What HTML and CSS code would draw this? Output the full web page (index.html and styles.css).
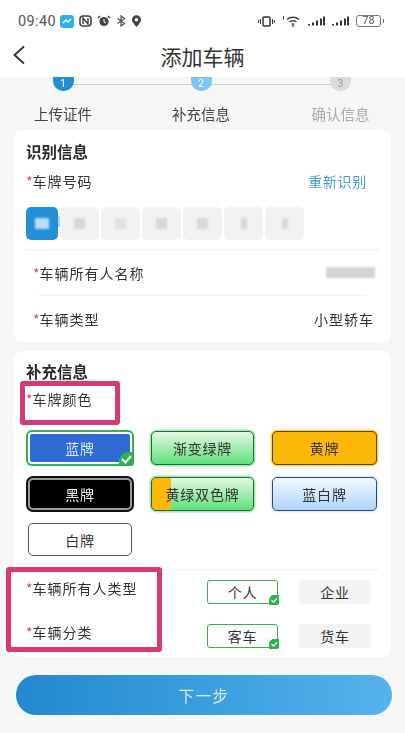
FILE: index.html
```html
<!DOCTYPE html>
<html lang="zh">
<head>
<meta charset="utf-8">
<title>添加车辆</title>
<link rel="stylesheet" href="styles.css">
</head>
<body>
<div class="app">
  <div class="status">
    <div class="status-left">
      <span class="time">09:40</span>
      <svg class="ic" width="14" height="13" viewBox="0 0 14 13"><rect width="14" height="13" rx="3" fill="#2fb4e0"/><path d="M3 8l3-3 2 2 3-3" stroke="#fff" stroke-width="1.3" fill="none"/></svg>
      <svg class="ic" width="13" height="12" viewBox="0 0 13 12"><rect x="1" y="1" width="11" height="10" rx="3" fill="none" stroke="#444" stroke-width="1.6"/><path d="M4 9V3l5 6V3" stroke="#444" stroke-width="1.4" fill="none"/></svg>
      <svg class="ic" width="14" height="12" viewBox="0 0 14 12"><circle cx="7" cy="6.5" r="4.6" fill="#444"/><path d="M1 3l2-2M13 3l-2-2" stroke="#444" stroke-width="1.5"/><path d="M7 4v3l2 1" stroke="#fff" stroke-width="1" fill="none"/></svg>
      <svg class="ic" width="10" height="12" viewBox="0 0 10 12"><path d="M1.5 3.5l7 5L5 11V1l3.5 2.500-7 5" stroke="#555" stroke-width="1.3" fill="none"/></svg>
      <svg class="ic" width="11" height="12" viewBox="0 0 11 12"><path d="M5.500 12C2.500 8.500 1 6.800 1 4.800a4.500 4.500 0 0 1 9 0C10 6.800 8.500 8.500 5.500 12z" fill="#444"/><circle cx="5.500" cy="4.800" r="1.700" fill="#fff"/></svg>
    </div>
    <div class="status-right">
      <svg class="ic" width="17" height="11" viewBox="0 0 17 11"><rect x="5" y="1" width="7" height="9" rx="1" fill="none" stroke="#333" stroke-width="1.5"/><path d="M2.500 3v5M.7 4v3M14.500 3v5M16.300 4v3" stroke="#333"/></svg>
      <svg class="ic wifi" width="19" height="12" viewBox="0 0 19 12"><path d="M5 4.500a9 9 0 0 1 12 0M7.500 7a6 6 0 0 1 7 0M9.500 9.300a3 3 0 0 1 3 0" stroke="#444" stroke-width="1.400" fill="none"/><circle cx="11" cy="11" r="1" fill="#444"/><path d="M1.500 1v3.500" stroke="#444"/></svg>
      <svg class="ic" width="17" height="10" viewBox="0 0 17 10"><path d="M1 8v1.500M5 6.500v3M9 4.500v5M13 2.500v7M16 .5v9" stroke="#333" stroke-width="2"/></svg>
      <svg class="ic" width="17" height="10" viewBox="0 0 17 10"><path d="M1 8v1.500M5 6.500v3M9 4.500v5M13 2.500v7M16 .5v9" stroke="#333" stroke-width="2"/></svg>
      <span class="battery">78</span>
    </div>
  </div>

  <header class="nav">
    <svg class="back" width="14" height="20" viewBox="0 0 14 20"><path d="M12 1.500L2.500 10l9.500 8.500" stroke="#333" stroke-width="1.900" fill="none"/></svg>
    <h1 class="nav-title">添加车辆</h1>
  </header>

  <main class="page">
    <div class="stepper">
      <div class="step">
        <span class="dot dot-done">1</span>
        <span class="step-label">上传证件</span>
      </div>
      <div class="step">
        <span class="dot dot-now">2</span>
        <span class="step-label">补充信息</span>
      </div>
      <div class="step">
        <span class="dot dot-todo">3</span>
        <span class="step-label step-label-todo">确认信息</span>
      </div>
    </div>

    <section class="card card-id">
      <h2 class="card-title">识别信息</h2>
      <div class="row-between plate-head">
        <span class="label"><i class="req">*</i>车牌号码</span>
        <span class="link">重新识别</span>
      </div>
      <div class="plate">
        <span class="cell cell-active"><b class="smudge smudge-light"></b></span>
        <span class="cell"><b class="smudge"></b></span>
        <span class="cell"><b class="smudge smudge-faint"></b></span>
        <span class="cell"><b class="smudge"></b></span>
        <span class="cell"><b class="smudge"></b></span>
        <span class="cell"><b class="smudge smudge-thin"></b></span>
        <span class="cell"><b class="smudge smudge-thin"></b></span>
      </div>
      <div class="info info-first">
        <span class="label"><i class="req">*</i>车辆所有人名称</span>
        <span class="masked"></span>
      </div>
      <div class="info">
        <span class="label label-out"><i class="req">*</i>车辆类型</span>
        <span class="value">小型轿车</span>
      </div>
    </section>

    <section class="card card-extra">
      <h2 class="card-title">补充信息</h2>
      <div class="label color-label"><i class="req">*</i>车牌颜色</div>
      <div class="colors">
        <span class="pl pl-blue">蓝牌<svg class="corner" width="15" height="14" viewBox="0 0 15 14"><path d="M15 0v11a3 3 0 0 1-3 3H0V9a9 9 0 0 1 9-9z" fill="#2fb152"/><path d="M3 7l3.500 3.500L12 4" stroke="#fff" stroke-width="2" fill="none"/></svg></span>
        <span class="pl pl-green">渐变绿牌</span>
        <span class="pl pl-yellow">黄牌</span>
        <span class="pl pl-black">黑牌</span>
        <span class="pl pl-dual">黄绿双色牌</span>
        <span class="pl pl-bluewhite">蓝白牌</span>
        <span class="pl pl-white">白牌</span>
      </div>
      <div class="choices">
        <div class="choice-row">
          <span class="label"><i class="req">*</i>车辆所有人类型</span>
          <div class="opts">
            <span class="opt opt-on">个人<svg class="corner-sm" width="10" height="10" viewBox="0 0 10 10"><path d="M10 0v8a2 2 0 0 1-2 2H0V5a5 5 0 0 1 5-5z" fill="#2fb152"/><path d="M2.500 5l2 2L8 3.500" stroke="#fff" stroke-width="1.300" fill="none"/></svg></span>
            <span class="opt">企业</span>
          </div>
        </div>
        <div class="choice-row">
          <span class="label"><i class="req">*</i>车辆分类</span>
          <div class="opts">
            <span class="opt opt-on">客车<svg class="corner-sm" width="10" height="10" viewBox="0 0 10 10"><path d="M10 0v8a2 2 0 0 1-2 2H0V5a5 5 0 0 1 5-5z" fill="#2fb152"/><path d="M2.500 5l2 2L8 3.500" stroke="#fff" stroke-width="1.300" fill="none"/></svg></span>
            <span class="opt">货车</span>
          </div>
        </div>
      </div>
    </section>

    <button class="next" type="button">下一步</button>
  </main>

  <div class="mark mark-color"></div>
  <div class="mark mark-owner"></div>
</div>
</body>
</html>
```
FILE: styles.css
```css
* { box-sizing: border-box; }
html, body { margin: 0; padding: 0; }
body { font-family: "Noto Sans CJK SC", "Noto Sans", sans-serif; color: #333; background: #f6f6f6; }
.app { position: relative; width: 405px; height: 733px; overflow: hidden; display: flex; flex-direction: column; filter: blur(0.35px); }

.status { height: 36px; padding: 6px 21px 0 18px; display: flex; justify-content: space-between; align-items: center; background: #fff; }
.status-left, .status-right { display: flex; align-items: center; gap: 5px; }
.status-right { gap: 7px; }
.time { font: 14.5px "Roboto", sans-serif; color: #555; letter-spacing: .4px; margin-right: -1px; }
.ic { display: block; flex: none; }
.battery { width: 25px; height: 12px; border: 1px solid #777; border-radius: 3px; font: 10.500px/10px "Roboto", sans-serif; color: #555; text-align: center; margin-right: 3px; position: relative; }
.battery::after { content: ""; position: absolute; right: -4px; top: 3px; width: 1.500px; height: 4px; background: #666; }

.nav { height: 41px; position: relative; background: #fff; display: flex; align-items: center; justify-content: center; }
.back { position: absolute; left: 12px; top: 9px; }
.nav-title { margin: -2px 0 0 0; font-size: 21px; font-weight: 400; color: #333; line-height: 40px; }

.page { flex: 1; padding: 0 14px; display: flex; flex-direction: column; }

.stepper { margin: -8px -14px 0; height: 61px; display: grid; grid-template-columns: 126px 150px 129px; position: relative; overflow: hidden; padding-top: 8px; clip-path: inset(8px 0 0 0); }
.stepper::before { content: ""; position: absolute; left: 70px; right: 70px; top: 15px; height: 1px; background: #d2d2d2; }
.step { display: flex; flex-direction: column; align-items: center; position: relative; }
.dot { width: 21px; height: 14px; border-radius: 0 0 10px 10px; font: 10px/13px "Roboto", sans-serif; color: #fff; text-align: center; }
.dot-done { background: #2390d0; }
.dot-now { background: #7cc6f0; }
.dot-todo { background: #dcdcdc; color: #999; }
.step-label { margin-top: 12px; font-size: 14.500px; line-height: 22px; color: #444; }
.step-label-todo { color: #aaa; }

.card { background: #fff; border-radius: 9px; padding: 11px 12px 0; }
.card-title { margin: 0; font-size: 15.500px; font-weight: 700; line-height: 20px; color: #2b2b2b; }
.label { font-size: 14px; line-height: 20px; color: #333; letter-spacing: 1px; }
.req { font-style: normal; color: #d8474c; letter-spacing: 0; }

.card-id { height: 212px; }
.row-between { display: flex; justify-content: space-between; align-items: center; }
.plate-head { margin-top: 10px; padding-right: 12px; }
.link { font-size: 14px; line-height: 20px; color: #4a9fc9; letter-spacing: .7px; }
.plate { margin-top: 16px; display: flex; gap: 2px; height: 33px; }
.cell { width: 39px; border-radius: 5px; background: #f2f2f2; display: flex; align-items: center; justify-content: center; position: relative; }
.cell-active { width: 32px; background: #2390d6; }
.cell-active::after { content: ""; position: absolute; right: -6px; top: 9px; width: 6px; height: 11px; background: #a9d8f6; }
.smudge { width: 11px; height: 11px; background: #d8d8d8; filter: blur(1px); }
.smudge-light { background: #b9def6; width: 14px; }
.smudge-faint { background: #e2e2e2; }
.smudge-thin { width: 6px; }
.info { height: 46px; margin: 0 12px 0 13px; display: flex; align-items: center; justify-content: space-between; border-top: 1px solid #efefef; }
.info-first { margin: 9px -1px 0 1px; padding: 0 5px 0 6px; }
.label-out { margin-left: -6px; }
.value { font-size: 14px; color: #333; letter-spacing: 1px; margin-right: -7px; }
.masked { width: 49px; height: 11px; background: #d4d4d4; filter: blur(.8px); }

.card-extra { height: 306px; margin-top: 9px; padding-top: 10px; }
.color-label { margin-top: 6px; line-height: 24px; }
.colors { margin-top: 19px; display: grid; grid-template-columns: 108px 105px 107px; column-gap: 16px; row-gap: 10px; grid-auto-rows: 36px; font-size: 14px; }
.pl { position: relative; display: flex; align-items: center; justify-content: center; border-radius: 5px; border: 1.500px solid #333; letter-spacing: .8px; }
.pl-blue { background: #3068d4; color: #dfe9ff; border: 2px solid #fff; box-shadow: 0 0 0 2px #32b060; margin: 2px; border-radius: 4px; }
.corner { position: absolute; right: -4px; bottom: -4px; }
.pl-green { background: linear-gradient(#e4f9e4, #5fe07a); border-color: #1f6a38; box-shadow: 0 0 0 1.500px #9eeab0; margin: 1px; }
.pl-yellow { background: #fdb90a; border-color: #5a4308; box-shadow: 0 0 0 1.500px #fdd35a; margin: 1px; }
.pl-black { background: #000; color: #eee; border: 2px solid #999; box-shadow: 0 0 0 2px #111; margin: 2px; }
.pl-dual { background: linear-gradient(90deg, #fdb90a 0 19px, transparent 19px), linear-gradient(#e4f9e4, #5fe07a); border-color: #1f6a38; box-shadow: 0 0 0 1.500px #9eeab0; margin: 1px; }
.pl-bluewhite { background: linear-gradient(#f2f8ff, #aed5fb); border-color: #2f4a70; box-shadow: 0 0 0 1.500px #dcecfb; margin: 1px; }
.pl-white { width: 104px; margin: 1px 2px 0; height: 33px; border-color: #555; background: #fff; }

.choices { margin-top: 11px; border-top: 1px solid #f0f0f0; }
.choice-row { display: flex; justify-content: space-between; align-items: flex-start; height: 44px; padding: 0 8px 0 0; }
.choice-row .label { margin-top: 8px; }
.opts { display: flex; gap: 21px; margin-top: 10px; }
.opt { position: relative; width: 72px; height: 24px; border-radius: 3px; background: #f3f3f3; display: flex; align-items: center; justify-content: center; font-size: 14px; color: #333; letter-spacing: .8px; }
.opt-on { width: 71px; background: #fff; border: 1.500px solid #3aaa55; }
.corner-sm { position: absolute; right: -1.500px; bottom: -1.500px; }

.next { margin: 18px 0 0 2px; width: 376px; height: 40px; border: 0; border-radius: 20px; background: linear-gradient(90deg, #2288cf, #55b3ec); color: #d8ecf9; font: 15.500px "Noto Sans CJK SC", sans-serif; letter-spacing: 1.500px; }

.mark { position: absolute; border: 5px solid #d63a76; border-radius: 3px; }
.mark-color { left: 20px; top: 381px; width: 100px; height: 44px; }
.mark-owner { left: 6px; top: 567px; width: 156px; height: 85px; }
```
